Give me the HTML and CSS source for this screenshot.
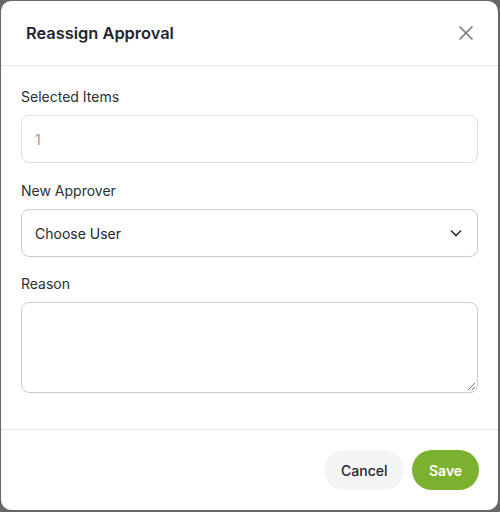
FILE: index.html
```html
<!DOCTYPE html>
<html>
<head>
<meta charset="utf-8">
<link rel="stylesheet" href="styles.css">
</head>
<body>
<div class="modal">
  <div class="modal-header">
    <h2 class="title">Reassign Approval</h2>
    <button class="close" aria-label="Close">
      <svg width="16" height="16" viewBox="0 0 16 16"><path d="M1.5 1.5L14.5 14.5M14.5 1.5L1.5 14.5" stroke="#777" stroke-width="1.6" fill="none"/></svg>
    </button>
  </div>
  <div class="modal-body">
    <div class="field first">
      <label class="label">Selected Items</label>
      <div class="input disabled">1</div>
    </div>
    <div class="field">
      <label class="label">New Approver</label>
      <div class="input select">
        <span>Choose User</span>
        <svg width="12" height="8" viewBox="0 0 12 8"><path d="M1 1.5L6 6.5L11 1.5" stroke="#2a2f36" stroke-width="1.6" fill="none"/></svg>
      </div>
    </div>
    <div class="field">
      <label class="label">Reason</label>
      <div class="textarea">
        <svg class="grip" width="10" height="10" viewBox="0 0 10 10"><path d="M9 2L2 9M9 6L6 9" stroke="#777" stroke-width="1" fill="none"/></svg>
      </div>
    </div>
  </div>
  <div class="modal-footer">
    <button class="btn cancel">Cancel</button>
    <button class="btn save">Save</button>
  </div>
</div>
</body>
</html>
```

FILE: styles.css
```css
html, body {
  margin: 0;
  padding: 0;
}
body {
  background: #666;
  padding: 1px 2px 2px 1px;
  font-family: Inter, "Noto Sans", sans-serif;
  height: 512px;
  box-sizing: border-box;
}
.modal {
  background: #fff;
  border-radius: 10px;
  height: 509px;
  display: flex;
  flex-direction: column;
  box-sizing: border-box;
}
.modal-header {
  height: 64px;
  border-bottom: 1px solid #e6e6e6;
  display: flex;
  align-items: center;
  justify-content: space-between;
  padding: 0 24px 0 25px;
}
.title {
  margin: 0;
  font-size: 16.4px;
  font-weight: 600;
  color: #1f2530;
}
.close {
  border: none;
  background: none;
  padding: 0;
  display: flex;
  cursor: pointer;
}
.modal-body {
  padding: 21px 20px 36px 20px;
  display: flex;
  flex-direction: column;
  gap: 17px;
  border-bottom: 1px solid #e6e6e6;
}
.field {
  display: flex;
  flex-direction: column;
  gap: 8px;
}
.field.first {
  margin-bottom: 1px;
}
.label {
  font-size: 14px;
  line-height: 20px;
  color: #2b2f36;
}
.input {
  height: 48px;
  box-sizing: border-box;
  border: 1px solid #c7cdd3;
  border-radius: 8px;
  padding: 0 13px;
  display: flex;
  align-items: center;
  font-size: 14px;
  color: #1f2530;
}
.input.disabled {
  border-color: #dcdfe3;
  color: #9a9a9a;
}
.select {
  justify-content: space-between;
  padding-right: 15px;
}
.textarea {
  height: 91px;
  box-sizing: border-box;
  border: 1px solid #c7cdd3;
  border-radius: 8px;
  position: relative;
}
.grip {
  position: absolute;
  right: 1px;
  bottom: 1px;
}
.modal-footer {
  flex: 1;
  display: flex;
  justify-content: flex-end;
  align-items: center;
  gap: 8px;
  padding: 0 19px 0 20px;
}
.btn {
  height: 40px;
  border: none;
  border-radius: 20px;
  font-family: Inter, "Noto Sans", sans-serif;
  font-size: 14px;
  font-weight: 600;
  padding: 0 17px;
}
.cancel {
  background: #f4f5f7;
  color: #1f2530;
  width: 80px;
  font-weight: 500;
}
.save {
  background: #7cb130;
  color: #fff;
  width: 67px;
}
```
